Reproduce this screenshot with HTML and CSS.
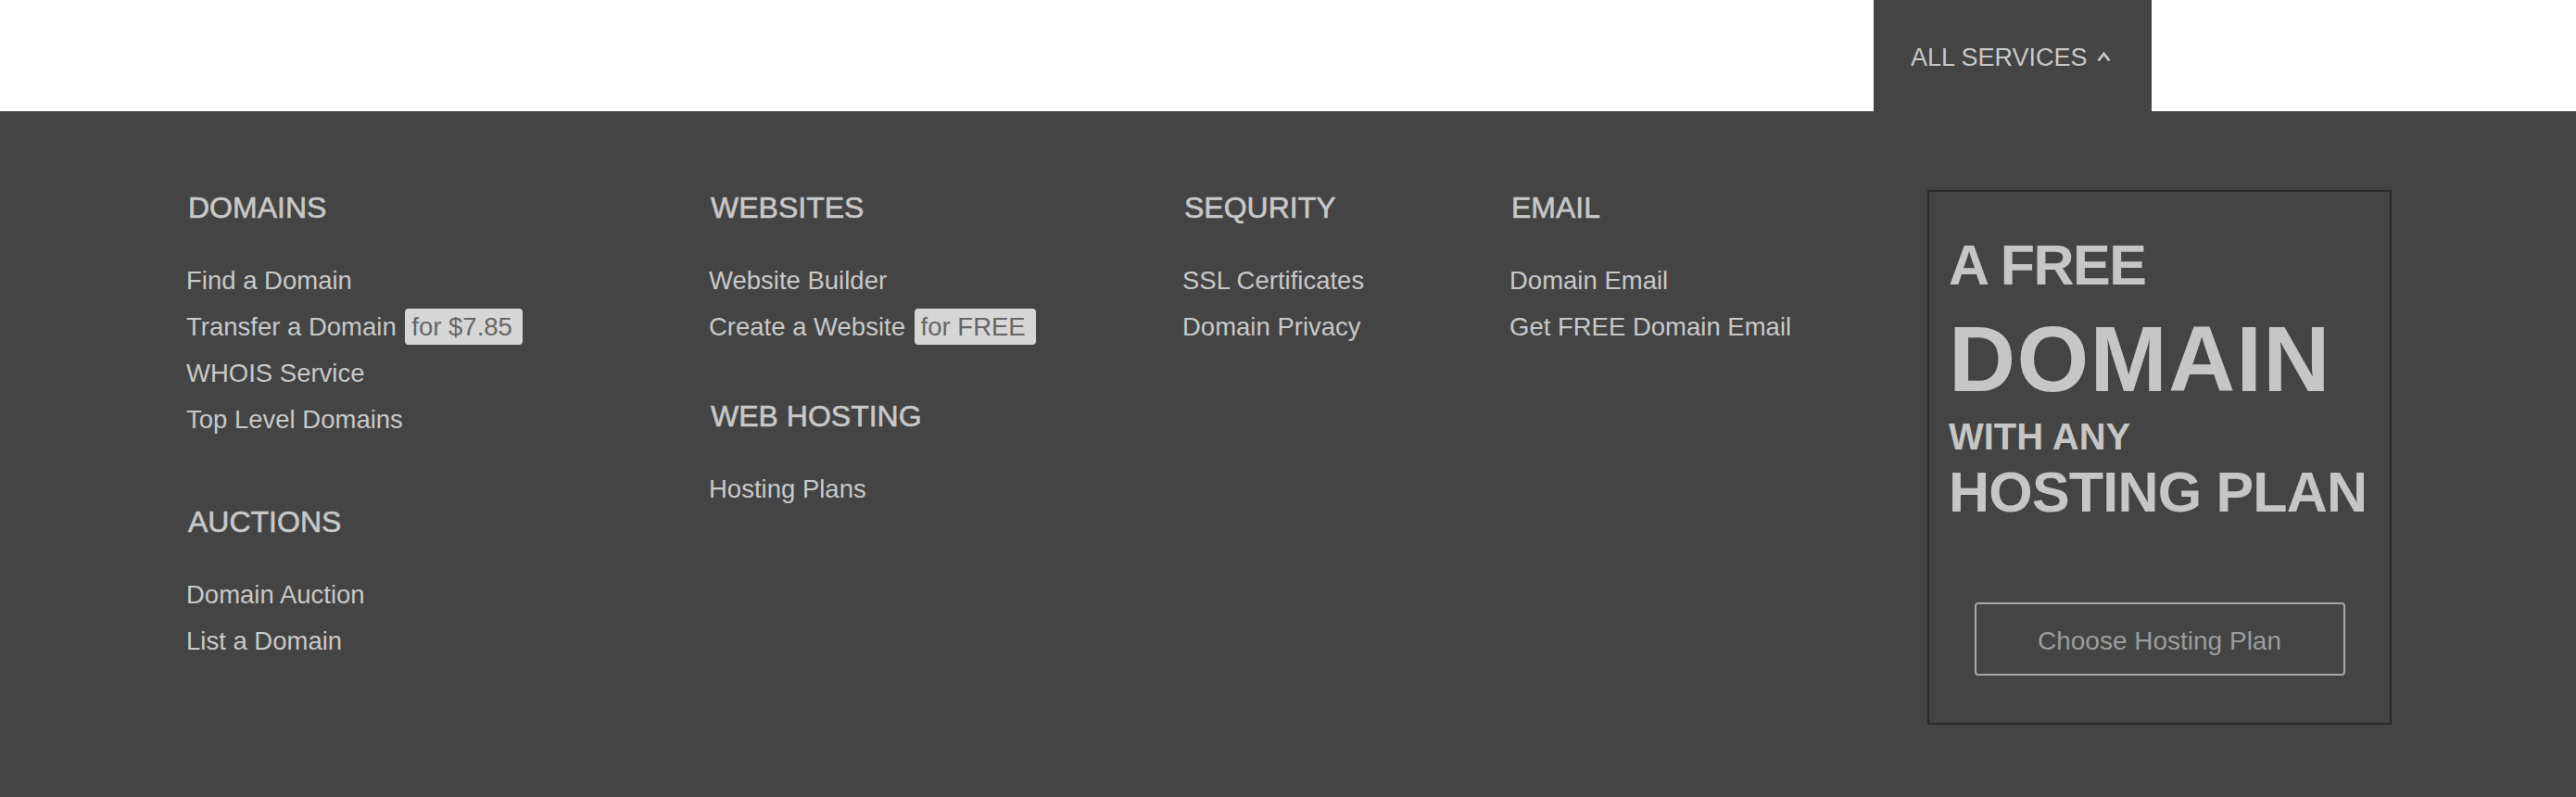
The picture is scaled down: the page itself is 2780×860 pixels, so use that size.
FILE: index.html
```html
<!DOCTYPE html>
<html lang="en">
<head>
<meta charset="utf-8">
<title>Footer</title>
<link rel="stylesheet" href="styles.css">
</head>
<body>
<header class="topbar">
  <a class="services-tab" href="#">ALL SERVICES
    <svg class="caret" width="15" height="12" viewBox="0 0 15 12"><path d="M1.5 10.5 L7.5 3 L13.5 10.5" fill="none" stroke="#c8c8c8" stroke-width="2.8"/></svg>
  </a>
</header>
<footer class="footer">
  <div class="col">
    <section class="group">
      <h3 class="group-title">DOMAINS</h3>
      <ul class="links">
        <li>Find a Domain</li>
        <li>Transfer a Domain <span class="badge">for $7.85</span></li>
        <li>WHOIS Service</li>
        <li>Top Level Domains</li>
      </ul>
    </section>
    <section class="group group-wide">
      <h3 class="group-title">AUCTIONS</h3>
      <ul class="links">
        <li>Domain Auction</li>
        <li>List a Domain</li>
      </ul>
    </section>
  </div>
  <div class="col">
    <section class="group">
      <h3 class="group-title">WEBSITES</h3>
      <ul class="links">
        <li>Website Builder</li>
        <li>Create a Website <span class="badge">for FREE</span></li>
      </ul>
    </section>
    <section class="group group-narrow">
      <h3 class="group-title">WEB HOSTING</h3>
      <ul class="links">
        <li>Hosting Plans</li>
      </ul>
    </section>
  </div>
  <div class="col">
    <section class="group">
      <h3 class="group-title">SEQURITY</h3>
      <ul class="links">
        <li>SSL Certificates</li>
        <li>Domain Privacy</li>
      </ul>
    </section>
  </div>
  <div class="col">
    <section class="group">
      <h3 class="group-title">EMAIL</h3>
      <ul class="links">
        <li>Domain Email</li>
        <li>Get FREE Domain Email</li>
      </ul>
    </section>
  </div>
  <aside class="promo">
    <div class="promo-line promo-a">A FREE</div>
    <div class="promo-line promo-domain">DOMAIN</div>
    <div class="promo-line promo-with">WITH ANY</div>
    <div class="promo-line promo-plan">HOSTING PLAN</div>
    <a class="promo-btn" href="#">Choose Hosting Plan</a>
  </aside>
</footer>
</body>
</html>
```

FILE: styles.css
```css
* { box-sizing: border-box; }
html, body { margin: 0; padding: 0; }
body {
  width: 2780px;
  height: 860px;
  background: #444444;
  font-family: "Liberation Sans", Arial, Helvetica, sans-serif;
  color: #c8c8c8;
  overflow: hidden;
}
a { text-decoration: none; color: inherit; }

.topbar {
  height: 120px;
  background: #ffffff;
  display: flex;
  padding-left: 2022px;
}
.services-tab {
  width: 300px;
  height: 120px;
  background: #444444;
  display: flex;
  align-items: flex-start;
  padding-left: 40px;
  padding-top: 44px;
  font-size: 27px;
  line-height: 36px;
  color: #c8c8c8;
}
.caret {
  margin-left: 10px;
  margin-top: 11px;
}

.footer {
  display: grid;
  grid-template-columns: 564px 511px 353px 451px 501px;
  padding-left: 201px;
  padding-top: 86px;
  height: 740px;
  align-items: start;
}
.col { display: flex; flex-direction: column; }

.group-title {
  margin: 0 0 36px 2px;
  font-size: 32px;
  line-height: 36px;
  font-weight: 400;
  -webkit-text-stroke: 0.6px #c8c8c8;
  color: #c8c8c8;
}
.group-wide { margin-top: 67px; }
.group-narrow { margin-top: 53px; }

.links {
  list-style: none;
  margin: 0;
  padding: 0;
  font-size: 27.5px;
  line-height: 50px;
  color: #c8c8c8;
}
.badge {
  display: inline-block;
  margin-left: 2px;
  padding: 0 11px 0 7px;
  line-height: 39px;
  background: #d6d6d6;
  color: #666666;
  border-radius: 4px;
}

.promo {
  width: 501px;
  height: 577px;
  margin-top: -1px;
  border: 2px solid #2a2a2a;
  padding: 49px 0 0 21px;
  display: flex;
  flex-direction: column;
  align-items: flex-start;
  color: #c6c6c6;
  font-weight: 700;
}
.promo-line { white-space: nowrap; }
.promo-a {
  font-size: 61px;
  line-height: 61px;
  letter-spacing: -1.5px;
}
.promo-domain {
  margin-top: 20px;
  font-size: 100px;
  line-height: 100px;
  letter-spacing: 1.2px;
}
.promo-with {
  margin-top: 15px;
  font-size: 40px;
  line-height: 38px;
  letter-spacing: 0;
}
.promo-plan {
  margin-top: 11px;
  font-size: 61px;
  line-height: 61px;
  letter-spacing: -0.8px;
}
.promo-btn {
  align-self: center;
  margin-left: -21px;
  margin-top: 88px;
  width: 400px;
  height: 79px;
  border: 2px solid #a8a8a8;
  border-radius: 4px;
  display: flex;
  justify-content: center;
  align-items: center;
  padding-top: 4px;
  font-size: 28px;
  font-weight: 400;
  color: #9c9c9c;
}
```
